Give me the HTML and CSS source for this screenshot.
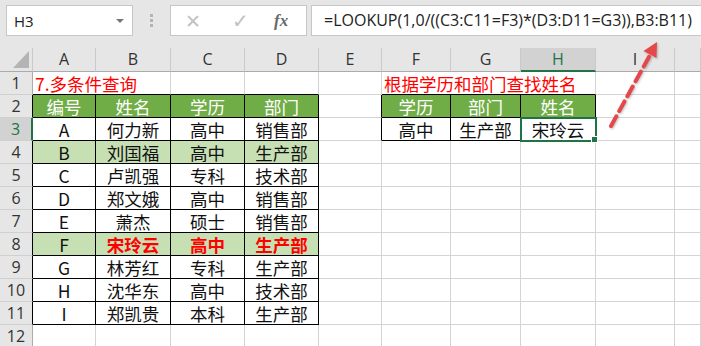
FILE: index.html
```html
<!DOCTYPE html>
<html lang="zh-CN">
<head>
  <meta charset="UTF-8">
  <title>多条件查询</title>
  <link rel="stylesheet" href="styles.css">
</head>
<body>

  <!-- Formula bar -->
  <div class="formula-bar">
    <div class="name-box">
      <span>H3</span>
      <span class="caret"></span>
    </div>
    <div class="grip"><i></i><i></i><i></i></div>
    <div class="fx-box">
      <span class="fx-cancel">✕</span>
      <span class="fx-enter">✓</span>
      <span class="fx-label">fx</span>
    </div>
    <div class="formula-input">=LOOKUP(1,0/((C3:C11=F3)*(D3:D11=G3)),B3:B11)</div>
  </div>

  <!-- Sheet -->
  <table class="sheet">
    <colgroup>
      <col style="width:33px"><col style="width:63px"><col style="width:75px"><col style="width:74px"><col style="width:74px">
      <col style="width:63px"><col style="width:69px"><col style="width:70px"><col style="width:75px"><col style="width:79px"><col style="width:26px">
    </colgroup>
    <tr class="col-head">
      <th class="corner"><span class="corner-tri"></span></th>
      <th>A</th><th>B</th><th>C</th><th>D</th><th>E</th><th>F</th><th>G</th><th class="active-col">H</th><th>I</th><th></th>
    </tr>
    <tr>
      <th class="row-num">1</th>
      <td colspan="2" class="title bt">7.多条件查询</td><td class="bt"></td><td class="bt"></td><td></td>
      <td colspan="3" class="title bt">根据学历和部门查找姓名</td><td></td><td></td>
    </tr>
    <tr>
      <th class="row-num bl">2</th>
      <td class="hd">编号</td><td class="hd">姓名</td><td class="hd">学历</td><td class="hd">部门</td><td class="br"></td>
      <td class="hd">学历</td><td class="hd">部门</td><td class="hd">姓名</td><td></td><td></td>
    </tr>
    <tr>
      <th class="row-num bl active-row">3</th>
      <td class="b">A</td><td class="b">何力新</td><td class="b">高中</td><td class="b">销售部</td><td class="br"></td>
      <td class="b">高中</td><td class="b">生产部</td><td class="b selected">宋玲云</td><td></td><td></td>
    </tr>
    <tr class="band">
      <th class="row-num bl">4</th>
      <td class="b">B</td><td class="b">刘国福</td><td class="b">高中</td><td class="b">生产部</td><td></td>
      <td></td><td></td><td></td><td></td><td></td>
    </tr>
    <tr>
      <th class="row-num bl">5</th>
      <td class="b">C</td><td class="b">卢凯强</td><td class="b">专科</td><td class="b">技术部</td><td></td>
      <td></td><td></td><td></td><td></td><td></td>
    </tr>
    <tr>
      <th class="row-num bl">6</th>
      <td class="b">D</td><td class="b">郑文娥</td><td class="b">高中</td><td class="b">销售部</td><td></td>
      <td></td><td></td><td></td><td></td><td></td>
    </tr>
    <tr>
      <th class="row-num bl">7</th>
      <td class="b">E</td><td class="b">萧杰</td><td class="b">硕士</td><td class="b">销售部</td><td></td>
      <td></td><td></td><td></td><td></td><td></td>
    </tr>
    <tr class="band">
      <th class="row-num bl">8</th>
      <td class="b">F</td><td class="b hit">宋玲云</td><td class="b hit">高中</td><td class="b hit">生产部</td><td></td>
      <td></td><td></td><td></td><td></td><td></td>
    </tr>
    <tr>
      <th class="row-num bl">9</th>
      <td class="b">G</td><td class="b">林芳红</td><td class="b">专科</td><td class="b">生产部</td><td></td>
      <td></td><td></td><td></td><td></td><td></td>
    </tr>
    <tr>
      <th class="row-num bl">10</th>
      <td class="b">H</td><td class="b">沈华东</td><td class="b">高中</td><td class="b">技术部</td><td></td>
      <td></td><td></td><td></td><td></td><td></td>
    </tr>
    <tr>
      <th class="row-num bl">11</th>
      <td class="b">I</td><td class="b">郑凯贵</td><td class="b">本科</td><td class="b">生产部</td><td></td>
      <td></td><td></td><td></td><td></td><td></td>
    </tr>
    <tr>
      <th class="row-num">12</th>
      <td></td><td></td><td></td><td></td><td></td>
      <td></td><td></td><td></td><td></td><td></td>
    </tr>
  </table>

  <!-- Pointer arrow drawn over the sheet -->
  <svg class="arrow" width="701" height="346" viewBox="0 0 701 346">
    <line x1="611" y1="126" x2="650" y2="55" stroke="#e5484a" stroke-width="4" stroke-dasharray="11 6" stroke-linecap="round"/>
    <polygon points="657,42 656.5,58 643.5,51" fill="#e5484a"/>
  </svg>

</body>
</html>
```

FILE: styles.css
```css
/* General */
body {
  margin: 0;
  background: #fff;
  font-family: "Noto Sans CJK SC", "Liberation Sans", sans-serif;
  width: 701px;
  height: 346px;
  overflow: hidden;
  position: relative;
}

/* Formula bar */
.formula-bar {
  height: 48px;
  background: #e6e6e6;
  display: flex;
  align-items: flex-start;
  padding-top: 5px;
  box-sizing: border-box;
}

.name-box {
  margin-left: 6px;
  width: 127px;
  height: 31px;
  box-sizing: border-box;
  background: #fff;
  border: 1px solid #c6c6c6;
  display: flex;
  align-items: center;
  justify-content: space-between;
  padding: 0 8px 0 7px;
  font-family: "Open Sans", "Liberation Sans", sans-serif;
  font-size: 15px;
  color: #222;
}

.caret {
  width: 0;
  height: 0;
  border-left: 4px solid transparent;
  border-right: 4px solid transparent;
  border-top: 4px solid #777;
}

.grip {
  width: 37px;
  height: 31px;
  display: flex;
  flex-direction: column;
  align-items: center;
  justify-content: center;
  gap: 2px;
}

.grip i {
  width: 3px;
  height: 3px;
  background: #b4b4b4;
}

.fx-box {
  width: 137px;
  height: 31px;
  box-sizing: border-box;
  background: #fff;
  border: 1px solid #c6c6c6;
  display: flex;
  align-items: center;
  padding-left: 14px;
  color: #c3c3c3;
}

.fx-cancel {
  font-size: 19px;
  width: 47px;
  font-family: "DejaVu Sans", sans-serif;
}

.fx-enter {
  font-size: 20px;
  width: 42px;
  font-family: "DejaVu Sans", sans-serif;
}

.fx-label {
  font-family: "Liberation Serif", serif;
  font-style: italic;
  font-weight: bold;
  font-size: 17px;
  color: #6a6a6a;
}

.formula-input {
  margin-left: 4px;
  flex: 1;
  height: 31px;
  box-sizing: border-box;
  background: #fff;
  border: 1px solid #c6c6c6;
  border-right: none;
  padding-left: 12px;
  line-height: 29px;
  font-family: "Open Sans", "Liberation Sans", sans-serif;
  font-size: 16px;
  color: #222;
  white-space: nowrap;
  overflow: hidden;
}

/* Sheet grid */
.sheet {
  table-layout: fixed;
  border-collapse: separate;
  border-spacing: 0;
  width: 701px;
}

.sheet tr {
  height: 23px;
}

.sheet td, .sheet th {
  padding: 0;
  box-sizing: border-box;
  height: 23px;
  line-height: 21px;
  border-right: 1px solid #d4d4d4;
  border-bottom: 1px solid #d4d4d4;
  text-align: center;
  white-space: nowrap;
}

.sheet td {
  font-size: 17.5px;
  color: #111;
}

/* Column and row headers */
.sheet .col-head th {
  height: 24px;
  background: #e6e6e6;
  border-right: 1px solid #cacaca;
  border-bottom: 1px solid #ababab;
  font-family: "Open Sans", "Liberation Sans", sans-serif;
  font-weight: normal;
  font-size: 16px;
  color: #333;
}

.sheet .col-head th.active-col {
  background: #d2d2d2;
  color: #217346;
  border-bottom: 2px solid #217346;
}

.corner {
  position: relative;
}

.corner-tri {
  position: absolute;
  right: 3px;
  bottom: 3px;
  width: 0;
  height: 0;
  border-left: 16px solid transparent;
  border-bottom: 17px solid #b4b4b4;
}

.sheet .row-num {
  background: #e6e6e6;
  border-right: 1px solid #ababab;
  border-bottom: 1px solid #d0d0d0;
  font-family: "Open Sans", "Liberation Sans", sans-serif;
  font-weight: normal;
  font-size: 16px;
  color: #333;
}

.sheet .row-num.active-row {
  background: #d2d2d2;
  color: #217346;
  border-right: 2px solid #217346;
}

/* Table contents */
.sheet .title {
  text-align: left;
  color: #ff0000;
  font-size: 17.5px;
  padding-left: 2px;
}

.sheet .hd {
  background: #70ad47;
  color: #fff;
  border-right: 1px solid #000;
  border-bottom: 1px solid #000;
}

.sheet .b {
  border-right: 1px solid #000;
  border-bottom: 1px solid #000;
}

.sheet .bt {
  border-bottom: 1px solid #000;
}

.sheet .br {
  border-right: 1px solid #000;
}

.sheet .bl {
  border-right: 1px solid #000;
}

.sheet .band .b {
  background: #c6e0b4;
}

.sheet .hit {
  color: #ff0000;
  font-weight: bold;
}

.selected {
  position: relative;
  outline: 2px solid #217346;
  outline-offset: -1px;
}

.selected::after {
  content: "";
  position: absolute;
  right: -3px;
  bottom: -3px;
  width: 5px;
  height: 5px;
  background: #217346;
  border: 1px solid #fff;
}

/* Arrow overlay */
.arrow {
  position: absolute;
  left: 0;
  top: 0;
  pointer-events: none;
  filter: drop-shadow(1px 1px 1px rgba(0, 0, 0, 0.25));
}
```
